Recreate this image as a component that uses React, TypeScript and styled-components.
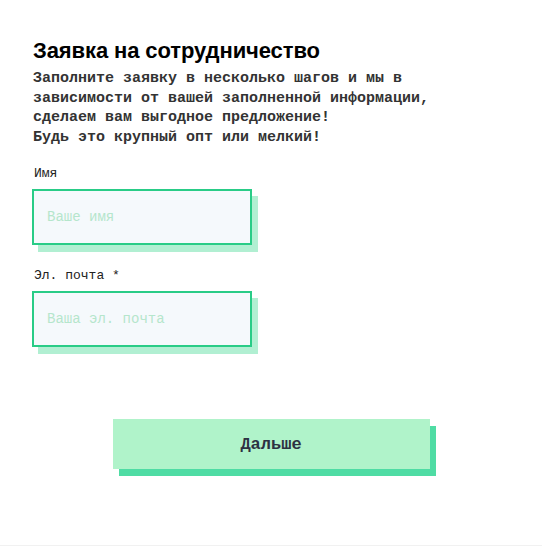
import styled, { createGlobalStyle } from 'styled-components'

const GlobalStyle = createGlobalStyle`
  html, body {
    margin: 0;
    padding: 0;
    background: #ffffff;
  }
`

function App() {
  return (
    <>
      <GlobalStyle />
      <Page>
        <Form onSubmit={(e) => e.preventDefault()}>
          <Title>Заявка на сотрудничество</Title>
          <Intro>
            Заполните заявку в несколько шагов и мы в зависимости от вашей заполненной информации,
            сделаем вам выгодное предложение!
            <br />
            Будь это крупный опт или мелкий!
          </Intro>

          <Field>
            <Label htmlFor="name">Имя</Label>
            <Input id="name" type="text" placeholder="Ваше имя" />
          </Field>

          <Field $spaced>
            <Label htmlFor="email">Эл. почта *</Label>
            <Input id="email" type="email" placeholder="Ваша эл. почта" />
          </Field>

          <Actions>
            <NextButton type="submit">Дальше</NextButton>
          </Actions>
        </Form>
      </Page>
    </>
  )
}

export default App

const Page = styled.div`
  height: 546px;
  box-sizing: border-box;
  border-bottom: 1px solid #f1f1f1;
  background: #ffffff;
`

const Form = styled.form`
  display: flex;
  flex-direction: column;
  padding: 39px 40px 0 32px;
`

const Title = styled.h1`
  margin: 0;
  padding-left: 1px;
  font-family: 'Liberation Sans', Arial, sans-serif;
  font-size: 22px;
  font-weight: 700;
  line-height: 24px;
  letter-spacing: -0.1px;
  color: #000000;
`

const Intro = styled.p`
  max-width: 440px;
  margin: 6px 0 0;
  padding-left: 1px;
  font-family: 'Liberation Mono', 'Courier New', monospace;
  font-size: 15px;
  font-weight: 700;
  line-height: 19.5px;
  color: #333333;
`

const Field = styled.div<{ $spaced?: boolean }>`
  display: flex;
  flex-direction: column;
  margin-top: ${(p) => (p.$spaced ? '23px' : '19px')};
`

const Label = styled.label`
  display: block;
  padding-left: 2px;
  margin-bottom: 7px;
  font-family: 'Liberation Mono', 'Courier New', monospace;
  font-size: 13px;
  line-height: 16px;
  color: #222222;
`

const Input = styled.input`
  width: 220px;
  height: 56px;
  box-sizing: border-box;
  padding: 0 13px;
  border: 2px solid #29cc87;
  border-radius: 0;
  background: #f5f9fc;
  box-shadow: 6px 7px 0 #b1efd2;
  font-family: 'Liberation Mono', 'Courier New', monospace;
  font-size: 14px;
  color: #333333;
  outline: none;

  &::placeholder {
    color: #b5e6cc;
  }
`

const Actions = styled.div`
  display: flex;
  justify-content: center;
  margin: 72px -40px 0 -32px;
`

const NextButton = styled.button`
  width: 317px;
  height: 50px;
  border: none;
  border-radius: 0;
  background: #b0f3ca;
  box-shadow: 6px 7px 0 #4fdca4;
  font-family: 'Liberation Mono', 'Courier New', monospace;
  font-size: 17px;
  font-weight: 700;
  color: #2d3142;
  cursor: pointer;
`
